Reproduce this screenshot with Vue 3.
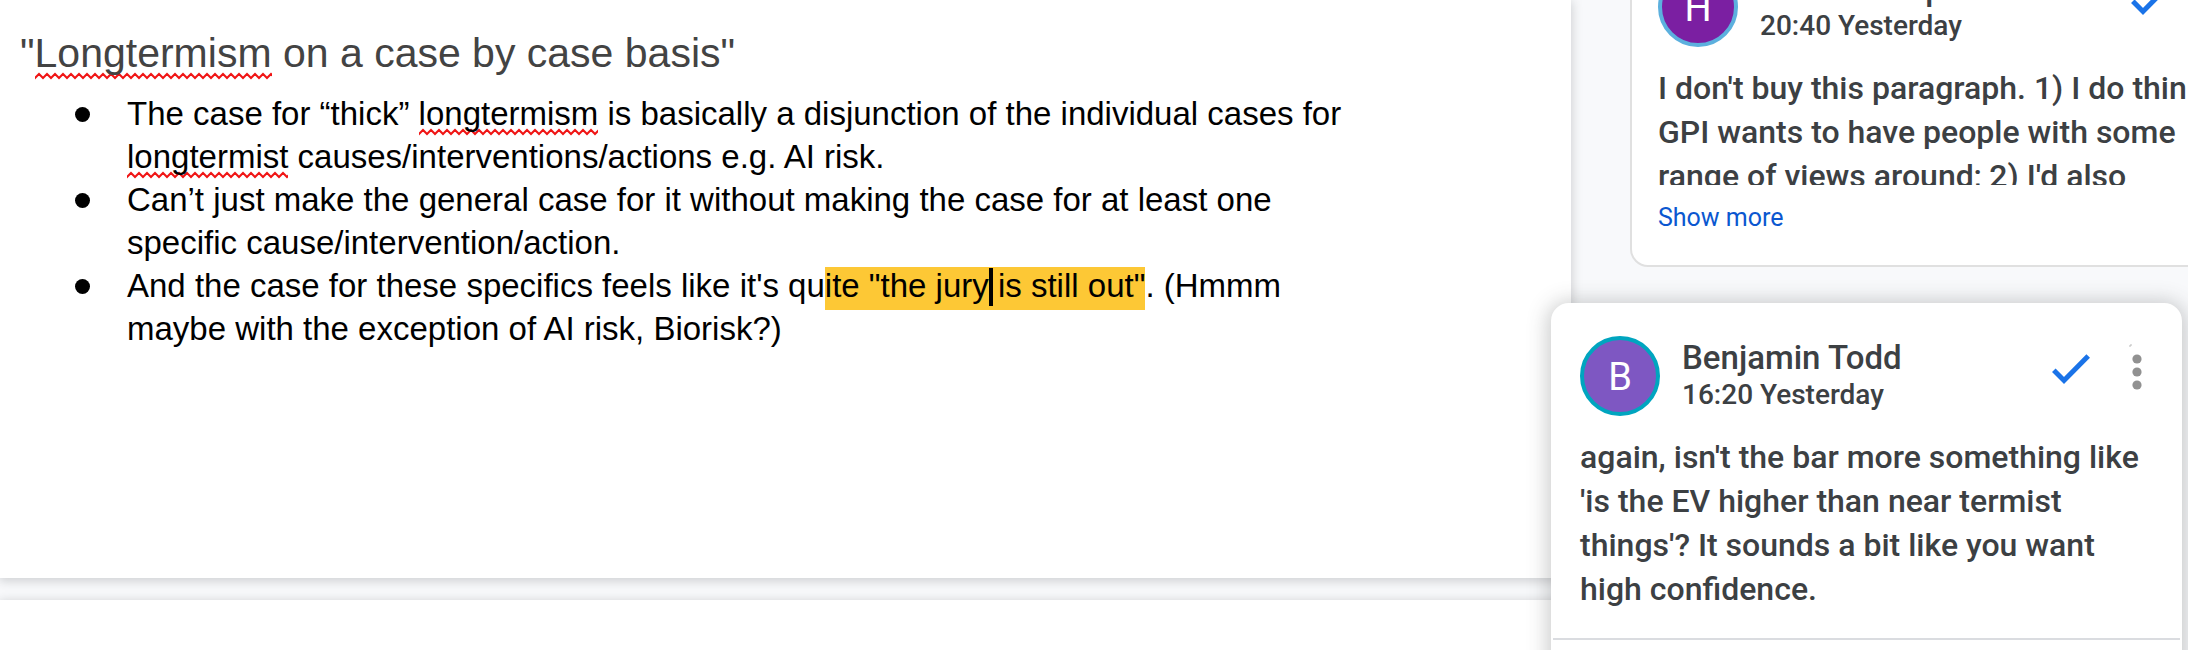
<script setup>
const comments = [
  {
    id: 'earlier',
    name: 'Howie Lempel',
    initial: 'H',
    time: '20:40 Yesterday',
    text: "I don't buy this paragraph. 1) I do think GPI wants to have people with some range of views around; 2) I'd also",
    active: false,
  },
  {
    id: 'active',
    name: 'Benjamin Todd',
    initial: 'B',
    time: '16:20 Yesterday',
    text: "again, isn't the bar more something like 'is the EV higher than near termist things'? It sounds a bit like you want high confidence.",
    active: true,
  },
]
</script>

<template>
  <div class="editor">
    <main class="pages">
      <article class="page">
        <h2>"<span class="typo">Longtermism</span> on a case by case basis"</h2>
        <ul>
          <li>The case for “thick” <span class="typo">longtermism</span> is basically a disjunction of the individual cases for <span class="typo">longtermist</span> causes/interventions/actions e.g. AI risk.</li>
          <li>Can’t just make the general case for it without making the case for at least one specific cause/intervention/action.</li>
          <li>And the case for these specifics feels like it's qu<mark>ite "the jury<span class="caret"></span> is still out"</mark>. (Hmmm maybe with the exception of AI risk, Biorisk?)</li>
        </ul>
      </article>
      <section class="page next" aria-label="Next page"></section>
    </main>

    <aside class="comments" aria-label="Comments">
      <article
        v-for="c in comments"
        :key="c.id"
        class="card"
        :class="c.active ? 'active' : 'earlier'"
      >
        <div class="content">
          <header>
            <span class="avatar" aria-hidden="true">{{ c.initial }}</span>
            <div class="who">
              <strong>{{ c.name }}</strong>
              <time>{{ c.time }}</time>
            </div>
            <button type="button" class="icon check" aria-label="Mark as resolved">
              <svg width="38" height="30" viewBox="0 0 38 30">
                <path d="M1.8 16.2 12 26.4 36.2 2" fill="none" stroke="#1a73e8" stroke-width="5" />
              </svg>
            </button>
            <button type="button" class="icon more" aria-label="More options">
              <svg width="16" height="46" viewBox="0 0 16 46">
                <path d="M1 1h2M1 1v2" stroke="#bbb" fill="none" />
                <g fill="#919191">
                  <circle cx="8" cy="15" r="4.6" />
                  <circle cx="8" cy="28" r="4.6" />
                  <circle cx="8" cy="41" r="4.6" />
                </g>
              </svg>
            </button>
          </header>
          <p>{{ c.text }}</p>
          <button v-if="!c.active" type="button" class="show-more">Show more</button>
        </div>
      </article>
    </aside>
  </div>
</template>

<style>
html,
body,
#app {
  height: 100%;
}
body {
  margin: 0;
  overflow: hidden;
}
</style>

<style scoped>
.editor {
  display: flex;
  height: 100%;
  overflow: hidden;
  background: #f8f9fb;
}
.pages {
  flex: 1;
  min-width: 0;
  display: flex;
  flex-direction: column;
  gap: 22px;
}
.page {
  box-sizing: border-box;
  height: 578px;
  flex: none;
  padding: 28px 200px 0 20px;
  background: #fff;
  box-shadow: 0 2px 10px 1px rgba(60, 64, 67, 0.22);
  font-family: "Liberation Sans", Arial, sans-serif;
  color: #000;
}
h2 {
  margin: 0;
  font-size: 41px;
  line-height: 50px;
  font-weight: 400;
  color: #434343;
}
ul {
  margin: 14px 0 0;
  padding: 0;
  list-style: none;
}
li {
  position: relative;
  padding-left: 107px;
  font-size: 33px;
  line-height: 43px;
}
li::before {
  content: "";
  position: absolute;
  left: 55px;
  top: 15px;
  width: 15px;
  height: 15px;
  border-radius: 50%;
  background: #000;
}
.typo {
  padding-bottom: 4px;
  background: url("data:image/svg+xml,%3Csvg xmlns='http://www.w3.org/2000/svg' width='8' height='8' viewBox='0 0 8 8'%3E%3Cpath d='M-4 2 0 6 4 2 8 6 12 2' fill='none' stroke='%23f01414' stroke-width='2'/%3E%3C/svg%3E") left bottom repeat-x;
}
mark {
  padding: 0 0 6px;
  background: #fdc835;
  color: inherit;
}
.caret {
  display: inline-block;
  width: 4px;
  height: 38px;
  margin: -10px -4px 0 0;
  vertical-align: -9px;
  background: #000;
}
.comments {
  width: 617px;
  flex: none;
  display: flex;
  flex-direction: column;
  gap: 36px;
  font-family: Roboto, sans-serif;
  color: #3c4043;
}
.card {
  position: relative;
  box-sizing: border-box;
  flex: none;
  border: 2px solid #fff;
  border-radius: 18px;
  background: #fff;
}
.earlier {
  height: 333px;
  margin: -66px -73px 0 59px;
  border-color: #e0e0e0;
}
.active {
  height: 420px;
  margin: 0 6px 0 -20px;
  box-shadow: 0 2px 20px 4px rgba(60, 64, 67, 0.26);
}
.content {
  box-sizing: border-box;
  padding: 31px 27px 0;
}
.earlier .content {
  padding-left: 26px;
}
.active .content {
  height: 335px;
  border-bottom: 2px solid #dadce0;
}
header {
  display: flex;
  align-items: flex-start;
}
.avatar {
  box-sizing: border-box;
  width: 80px;
  height: 80px;
  border: 4px solid #00a5bf;
  border-radius: 50%;
  background: #7e57c2;
  color: #fff;
  font-size: 38px;
  line-height: 74px;
  text-align: center;
}
.earlier .avatar {
  border-color: #5cb0de;
  background: #7b1fa2;
}
.who {
  flex: 1;
  padding: 3px 0 0 22px;
}
strong,
time {
  display: block;
  font-weight: 500;
}
strong {
  font-size: 33px;
  line-height: 38px;
}
time {
  font-size: 28px;
  line-height: 36px;
}
.icon {
  display: block;
  padding: 0;
  border: 0;
  background: none;
}
.icon svg {
  display: block;
}
.check {
  margin-top: 18px;
}
.more {
  margin: 8px 8px 0 39px;
}
p {
  margin: 19px 0 0;
  font-size: 32px;
  font-weight: 500;
  line-height: 44px;
}
.earlier p {
  height: 119px;
  margin-right: 10px;
  overflow: hidden;
}
.show-more {
  display: block;
  margin-top: 16px;
  padding: 0;
  border: 0;
  background: none;
  font: 25px/34px Roboto, sans-serif;
  color: #0b57d0;
}
</style>
